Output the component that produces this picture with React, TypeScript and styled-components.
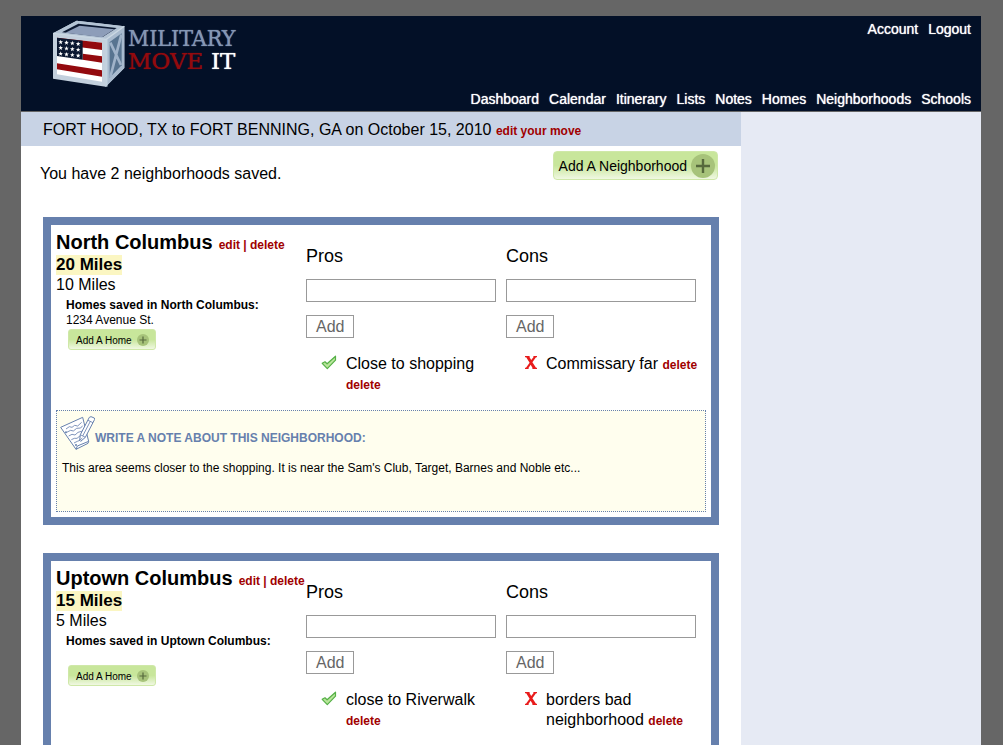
import React from "react";
import styled, { createGlobalStyle, css } from "styled-components";

const GlobalStyle = createGlobalStyle`
  * { box-sizing: border-box; }
  body {
    margin: 0;
    padding: 0 22px 0 21px;
    background: #666;
    color: #000;
    font: 16px/20px "Liberation Sans", Arial, Helvetica, sans-serif;
  }
  h1, h2, h3, p, ul { margin: 0; padding: 0; font-weight: normal; }
  ul { list-style: none; }
`;

const Page = styled.div`
  max-width: 960px;
  margin: 16px auto 0;
`;

const Header = styled.header`
  display: flex;
  justify-content: space-between;
  min-height: 95px;
  margin-bottom: 1px;
  padding: 4px 10px 3px 32px;
  background: #031027;
`;

const Brand = styled.a`
  display: flex;
  align-items: flex-start;
  gap: 3px;
  text-decoration: none;
`;

const BrandName = styled.span`
  display: block;
  padding-top: 7px;
  font-size: 23px;
  line-height: 23px;
`;

const BrandTop = styled.span`
  display: block;
  font-family: "DejaVu Serif Condensed", "DejaVu Serif", serif;
  color: #8496b4;
  text-shadow: 0 0 1px #8496b4;
`;

const BrandBottom = styled.span`
  display: flex;
  justify-content: space-between;
  font-family: "DejaVu Serif", serif;
  color: #930a0e;
  text-shadow: 0 0 1px #930a0e;
`;

const BrandIt = styled.span`
  color: #fff;
  text-shadow: 0 0 1px #fff;
`;

const Menus = styled.div`
  display: flex;
  flex-direction: column;
  justify-content: space-between;
  align-items: flex-end;
`;

const Menu = styled.nav`
  display: flex;
  gap: 10px;
`;

const MenuLink = styled.a`
  font-size: 14px;
  line-height: 18px;
  color: #fff;
  text-decoration: none;
  text-shadow: 0 0 1px #fff;
`;

const Columns = styled.div`
  display: grid;
  grid-template-columns: 3fr 1fr;
`;

const Main = styled.main`
  min-width: 0;
  min-height: 100vh;
  background: #fff;
`;

const Sidebar = styled.aside`
  background: #e6eaf4;
`;

const MoveBar = styled.h1`
  padding: 8px 22px 5px;
  font-size: 16px;
  line-height: 20px;
  background: #c8d3e5;
`;

const ActionLink = styled.a`
  font-size: 12px;
  font-weight: bold;
  color: #a00000;
  text-decoration: none;
`;

const Summary = styled.div`
  display: flex;
  justify-content: space-between;
  align-items: flex-start;
  padding: 5px 23px 33px 19px;
`;

const SummaryText = styled.p`
  padding-top: 13px;
`;

const GreenButton = styled.button<{ $small?: boolean }>`
  display: inline-flex;
  align-items: center;
  justify-content: space-between;
  border: 1px solid #cfe8a8;
  background: linear-gradient(#c8e69b 0%, #c8e69b 50%, #f0f8e2 100%);
  font-family: inherit;
  color: #000;
  ${(p) =>
    p.$small
      ? css`
          gap: 5px;
          height: 21px;
          margin: 1px 2px;
          padding: 1px 6px 0 7px;
          border-radius: 3px;
          font-size: 10px;
        `
      : css`
          gap: 4px;
          height: 29px;
          padding: 0 2px 0 5px;
          border-radius: 4px;
          font-size: 14px;
        `}
`;

const CardList = styled.div`
  display: flex;
  flex-direction: column;
  gap: 28px;
  padding: 0 22px 28px;
`;

const Card = styled.section`
  border: 8px solid #6680ad;
  padding: 5px;
`;

const CardGrid = styled.div`
  display: grid;
  grid-template-columns: 5fr 4fr 4fr;
`;

const Place = styled.div`
  min-width: 0;
`;

const PlaceTitle = styled.div`
  display: flex;
  align-items: baseline;
  gap: 6px;
  height: 25px;
  white-space: nowrap;
  line-height: 25px;
`;

const PlaceName = styled.h2`
  font-size: 20px;
  font-weight: bold;
`;

const Actions = styled.span`
  font-size: 12px;
  font-weight: bold;
  color: #a00000;
`;

const MainDistance = styled.strong`
  display: table;
  font-size: 17px;
  background: #fbf6c2;
`;

const Homes = styled.div`
  padding: 3px 0 0 10px;
  font-size: 12px;
  line-height: 15px;
`;

const HomesLabel = styled.h3`
  font-size: 12px;
  font-weight: bold;
`;

const HomeAddress = styled.p`
  min-height: 15px;
`;

const Opinions = styled.form`
  padding-top: 16px;
`;

const OpinionLabel = styled.label`
  display: block;
  font-size: 18px;
`;

const OpinionInput = styled.input`
  display: block;
  width: 95%;
  height: 23px;
  margin: 13px 0;
  border: 1px solid #999;
  padding: 0 4px;
  font: inherit;
`;

const AddButton = styled.button`
  display: block;
  height: 23px;
  border: 1px solid #999;
  padding: 0 9px;
  background: #fff;
  font: inherit;
  line-height: 20px;
  color: #666;
`;

const OpinionList = styled.ul`
  padding: 16px 0 15px;
`;

const OpinionItem = styled.li`
  display: grid;
  grid-template-columns: 31px 1fr;
  column-gap: 9px;

  svg { justify-self: end; }
`;

const Note = styled.div`
  min-height: 102px;
  border: 1px dotted #6680ad;
  padding: 5px;
  background: #fffeee;
  font-size: 12px;
  line-height: 15px;
`;

const NoteHead = styled.div`
  display: flex;
  align-items: flex-end;
  margin-bottom: 11px;
  margin-left: -2px;
`;

const NoteTitle = styled.h3`
  padding-bottom: 4px;
  font-size: 12px;
  font-weight: bold;
  color: #6680ad;
`;

const STARS = [0, 1, 2].flatMap((row) =>
  [0, 1, 2, 3].map((col) => ({ x: 47 + col * 17.5, y: 82 + row * 17.5 + col * 1.8 }))
);

function CrateLogo() {
  return (
    <svg width="72" height="67" viewBox="24 16 216 201" aria-hidden="true">
      <path d="M24 56 95 18 238 35 238 160 182 216 24 192Z" fill="#c3d0dd" />
      <path d="M24 56 95 18 238 35 184 74Z" fill="#b4c4d5" />
      <path d="M51 53 100 27 215 40 173 67Z" fill="#0a1730" />
      <path d="M61 54 104 33 208 44 171 68Z" fill="#8d9db9" />
      <path d="M184 74 238 35 238 160 182 216Z" fill="#a8bace" />
      <path d="M194 82 230 56 230 152 194 189Z" fill="#587490" />
      <path d="M196 84 228 151M229 60 196 187" stroke="#a0b3c9" strokeWidth="8" fill="none" />
      <path d="M184 74V216" stroke="#c3d3e0" strokeWidth="7" />
      <path d="M24 56 184 74 238 35" fill="none" stroke="#cbd8e3" strokeWidth="4" />
      <path d="M36 69 171 84V201L36 179Z" fill="#fff" />
      <path d="M36 69 171 84V106L36 89Z" fill="#930a0e" />
      <path d="M113 117 171 125V144L113 135Z" fill="#930a0e" />
      <path d="M36 146 171 167V186L36 164Z" fill="#930a0e" />
      <path d="M36 69 113 78V135L36 124Z" fill="#0a1730" />
      {STARS.map(({ x, y }) => (
        <path
          key={`${x}-${y}`}
          transform={`translate(${x} ${y})`}
          d="M0-7 1.8-2.2 7-2 2.8 1.3 4.4 6.5 0 3.5-4.4 6.5-2.8 1.3-7-2-1.8-2.2Z"
          fill="#fff"
        />
      ))}
    </svg>
  );
}

function PlusIcon({ size }: { size: number }) {
  return (
    <svg width={size} height={size} viewBox="0 0 24 24" aria-hidden="true">
      <circle cx="12" cy="12" r="12" fill="#a7c37a" />
      <path d="M12 5V19M5 12H19" stroke="#56693c" strokeWidth="2.4" />
    </svg>
  );
}

function CheckIcon() {
  return (
    <svg width="16" height="17" viewBox="0 0 16 17" aria-hidden="true">
      <path
        d="M1.2 9.3 4 7.8 6.1 9.8 14.5 2.2V6.2L6.3 14.6Z"
        fill="#b9e59b"
        stroke="#55b046"
        strokeWidth="1.2"
        strokeLinejoin="round"
      />
    </svg>
  );
}

function CrossIcon() {
  return (
    <svg width="12" height="17" viewBox="0 0 12 17" aria-hidden="true">
      <path
        d="M0 2H4.6V3.2L6.2 6 8.4 3.2V2H12V3.2H11L7.4 8.3 11 13.8H12V15H7.4V13.8L5.7 10.7 3.6 13.8V15H0V13.8H1L4.6 8.8 1.2 3.2H0Z"
        fill="#e81b1b"
      />
    </svg>
  );
}

function NoteIcon() {
  return (
    <svg width="35" height="34" viewBox="0 0 105 102" fill="none" stroke="#6680ad" strokeWidth="3" aria-hidden="true">
      <path d="M2 34 68 4 86 76 84 82 48 100Z" fill="#fff" />
      <path d="M48 100 52 90 86 76" />
      <path d="M18 39 28 32 36 34 44 28 53 30 65 19M20 49 32 43 40 45 50 37 62 36 68 29M26 60 36 55 45 57 54 49 68 45M34 71 43 67 51 67 62 58M42 81 52 76 62 72" strokeWidth="2.5" />
      <path d="M59 73 61 56 88 4 93 2 103 6 104 10 76 64 62 76Z" fill="#fff" />
      <path d="M61 56 76 64M84 13 99 20M91 16 68 60M59 73 67 66" strokeWidth="2.5" />
      <circle cx="18" cy="49" r="3" fill="#6680ad" stroke="none" />
      <circle cx="48" cy="87" r="3" fill="#6680ad" stroke="none" />
    </svg>
  );
}

type Kind = "pros" | "cons";

interface Neighborhood {
  id: string;
  name: string;
  mainDistance: string;
  otherDistance: string;
  home: string;
  pros: string;
  cons: string;
  note: string;
}

const NEIGHBORHOODS: Neighborhood[] = [
  {
    id: "north",
    name: "North Columbus",
    mainDistance: "20 Miles",
    otherDistance: "10 Miles",
    home: "1234 Avenue St.",
    pros: "Close to shopping",
    cons: "Commissary far",
    note: "This area seems closer to the shopping. It is near the Sam's Club, Target, Barnes and Noble etc...",
  },
  {
    id: "uptown",
    name: "Uptown Columbus",
    mainDistance: "15 Miles",
    otherDistance: "5 Miles",
    home: "",
    pros: "close to Riverwalk",
    cons: "borders bad neighborhood",
    note: "",
  },
];

const SECTIONS = ["Dashboard", "Calendar", "Itinerary", "Lists", "Notes", "Homes", "Neighborhoods", "Schools"];

function OpinionColumn({ id, kind, text }: { id: string; kind: Kind; text: string }) {
  const inputId = `${id}-${kind}`;
  return (
    <Opinions onSubmit={(e) => e.preventDefault()}>
      <OpinionLabel htmlFor={inputId}>{kind === "pros" ? "Pros" : "Cons"}</OpinionLabel>
      <OpinionInput id={inputId} type="text" />
      <AddButton type="submit">Add</AddButton>
      <OpinionList>
        <OpinionItem>
          {kind === "pros" ? <CheckIcon /> : <CrossIcon />}
          <span>
            {text} <ActionLink href="#delete">delete</ActionLink>
          </span>
        </OpinionItem>
      </OpinionList>
    </Opinions>
  );
}

function NeighborhoodCard({ item }: { item: Neighborhood }) {
  return (
    <Card>
      <CardGrid>
        <Place>
          <PlaceTitle>
            <PlaceName>{item.name}</PlaceName>
            <Actions>
              <ActionLink href="#edit">edit</ActionLink> | <ActionLink href="#delete">delete</ActionLink>
            </Actions>
          </PlaceTitle>
          <MainDistance>{item.mainDistance}</MainDistance>
          <p>{item.otherDistance}</p>
          <Homes>
            <HomesLabel>Homes saved in {item.name}:</HomesLabel>
            <HomeAddress>{item.home}</HomeAddress>
            <GreenButton type="button" $small>
              Add A Home <PlusIcon size={12} />
            </GreenButton>
          </Homes>
        </Place>
        <OpinionColumn id={item.id} kind="pros" text={item.pros} />
        <OpinionColumn id={item.id} kind="cons" text={item.cons} />
      </CardGrid>
      <Note>
        <NoteHead>
          <NoteIcon />
          <NoteTitle>WRITE A NOTE ABOUT THIS NEIGHBORHOOD:</NoteTitle>
        </NoteHead>
        <p>{item.note}</p>
      </Note>
    </Card>
  );
}

export default function App() {
  return (
    <>
      <GlobalStyle />
      <Page>
        <Header>
          <Brand href="#home">
            <CrateLogo />
            <BrandName>
              <BrandTop>MILITARY</BrandTop>
              <BrandBottom>
                MOVE<BrandIt>IT</BrandIt>
              </BrandBottom>
            </BrandName>
          </Brand>
          <Menus>
            <Menu aria-label="Account">
              <MenuLink href="#account">Account</MenuLink>
              <MenuLink href="#logout">Logout</MenuLink>
            </Menu>
            <Menu aria-label="Sections">
              {SECTIONS.map((name) => (
                <MenuLink key={name} href={`#${name.toLowerCase()}`}>
                  {name}
                </MenuLink>
              ))}
            </Menu>
          </Menus>
        </Header>
        <Columns>
          <Main>
            <MoveBar>
              FORT HOOD, TX to FORT BENNING, GA on October 15, 2010{" "}
              <ActionLink href="#edit-move">edit your move</ActionLink>
            </MoveBar>
            <Summary>
              <SummaryText>You have 2 neighborhoods saved.</SummaryText>
              <GreenButton type="button">
                Add A Neighborhood <PlusIcon size={24} />
              </GreenButton>
            </Summary>
            <CardList>
              {NEIGHBORHOODS.map((item) => (
                <NeighborhoodCard key={item.id} item={item} />
              ))}
            </CardList>
          </Main>
          <Sidebar />
        </Columns>
      </Page>
    </>
  );
}
